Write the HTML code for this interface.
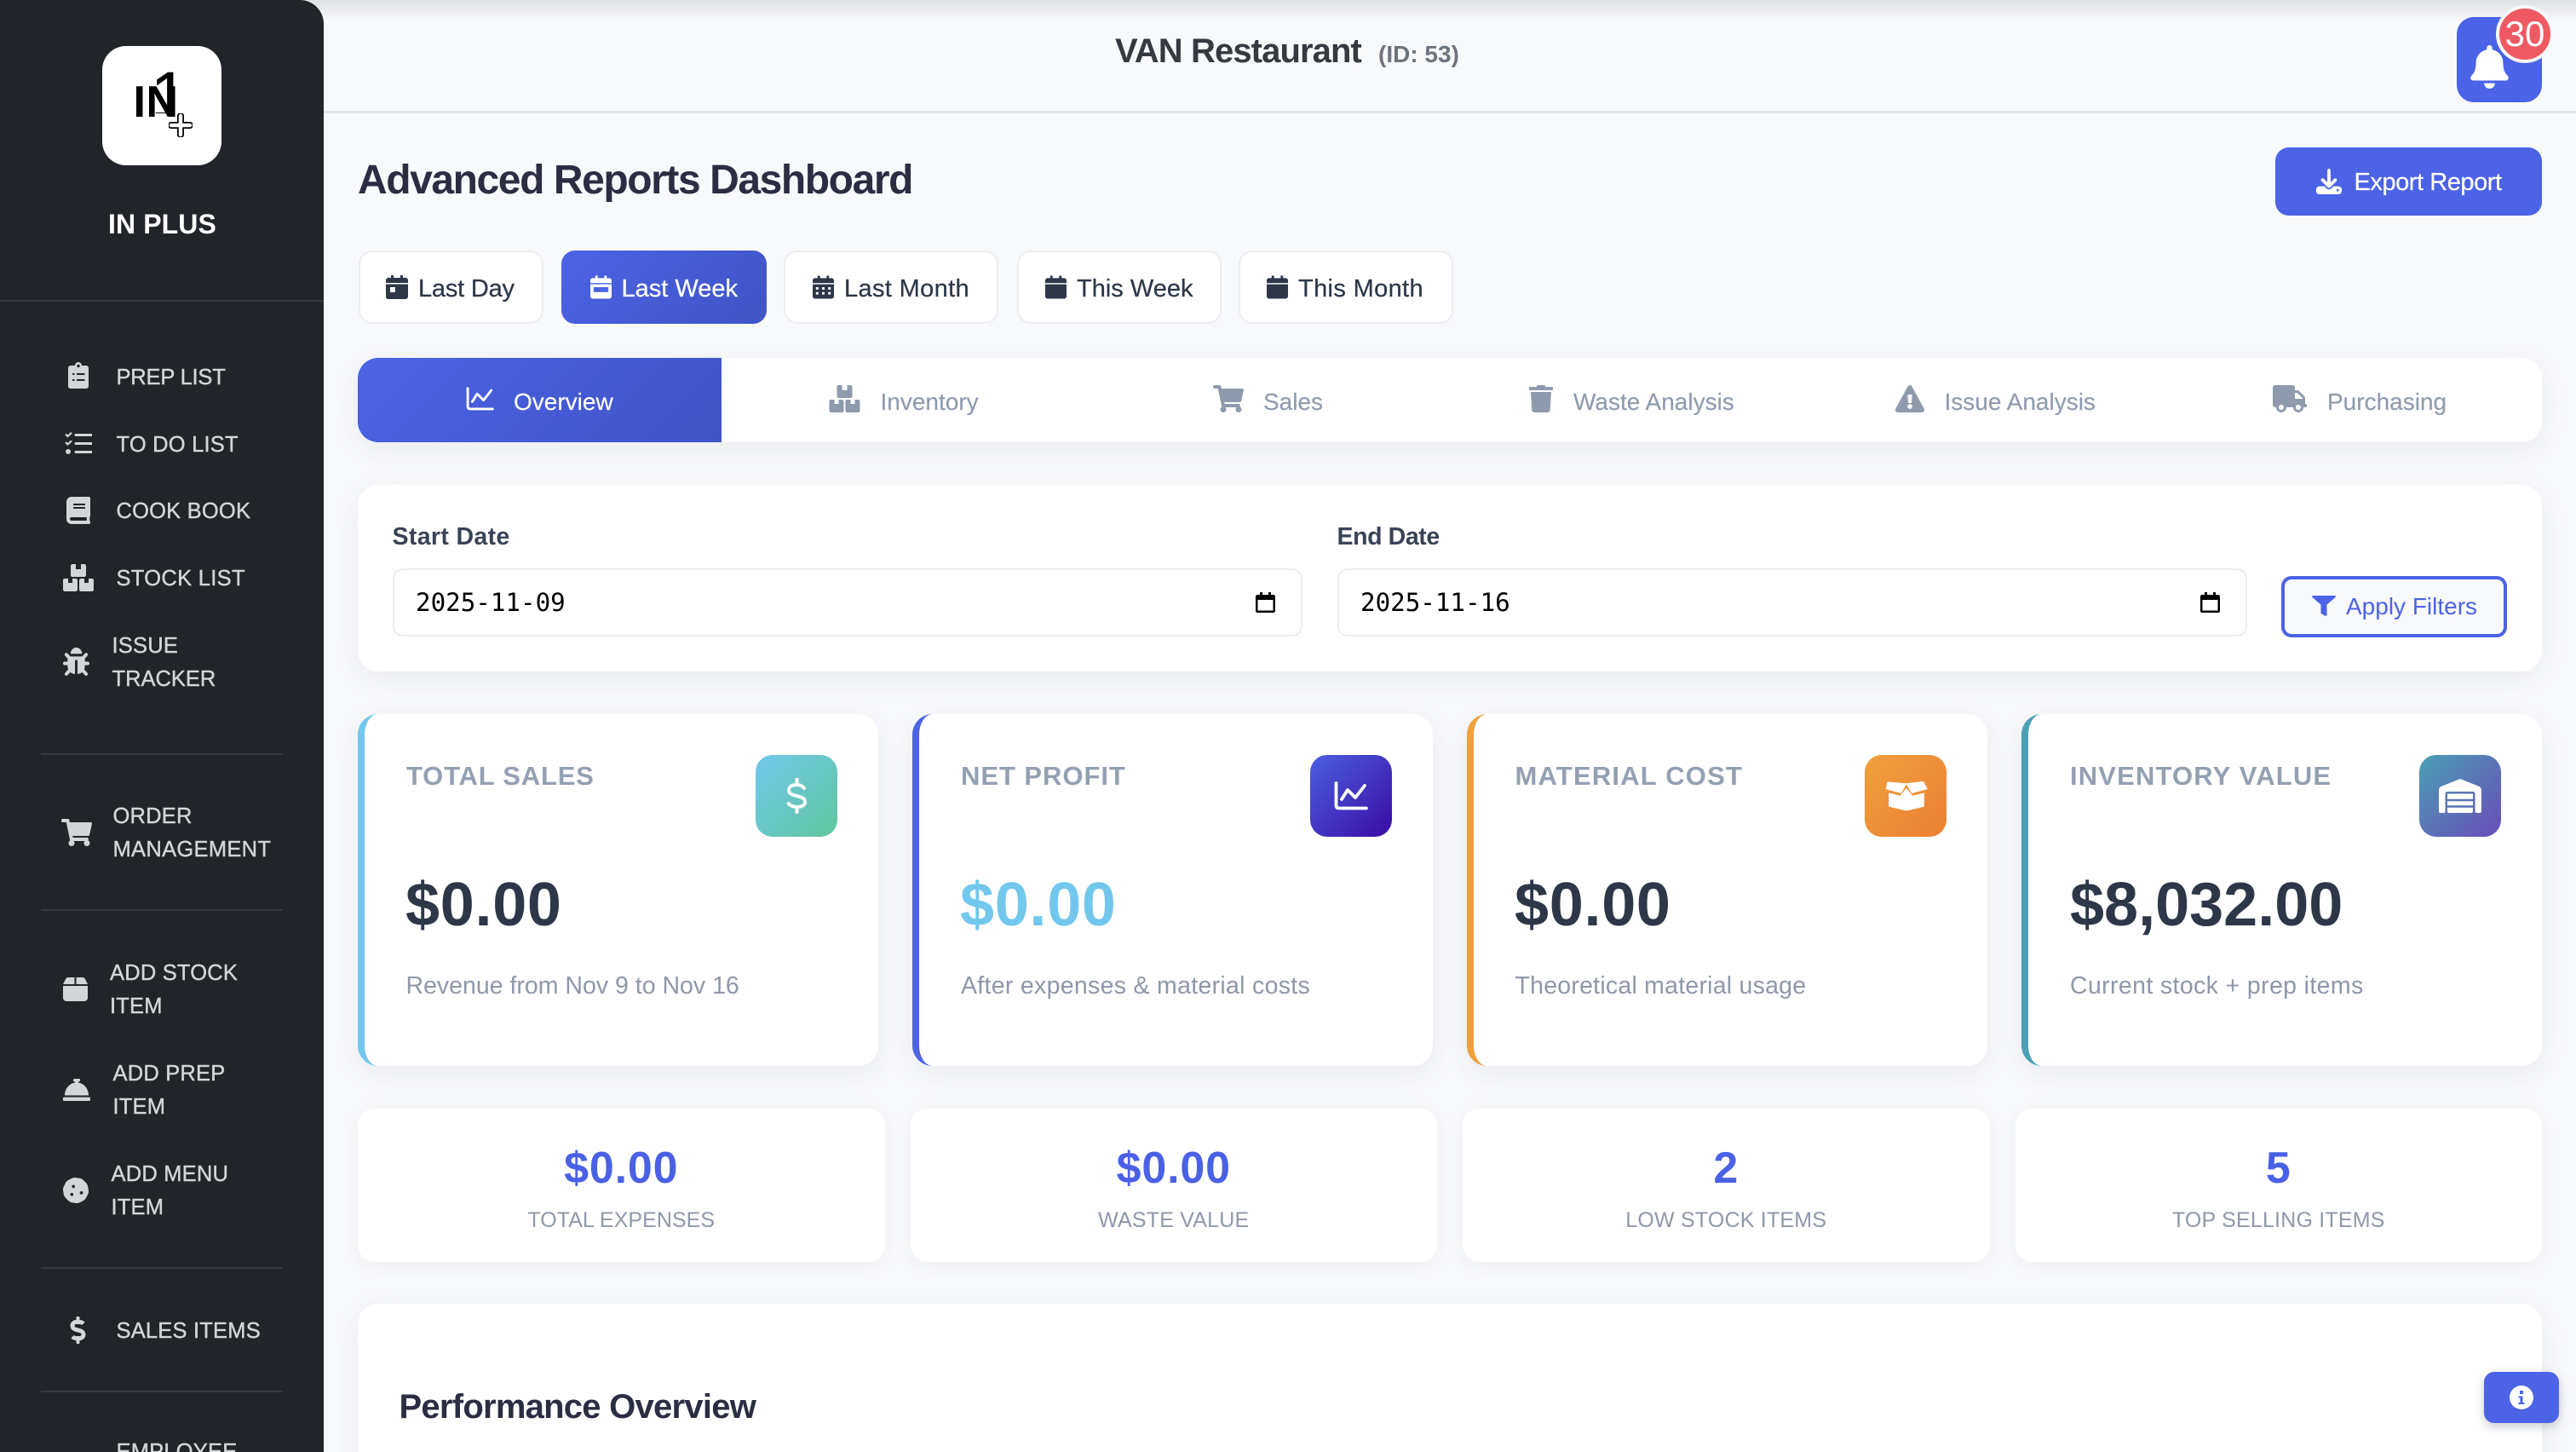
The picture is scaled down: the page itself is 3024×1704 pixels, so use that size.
<!DOCTYPE html>
<html lang="en"><head><meta charset="utf-8"><title>Advanced Reports Dashboard</title>
<style>
html,body{margin:0;padding:0;width:3024px;height:1704px;overflow:hidden;background:#f8f9fb;font-family:"Liberation Sans",sans-serif}
#p{position:relative;width:3024px;height:1704px;overflow:hidden;background:#f8f9fb}
#p div,#p svg,#p span.t{position:absolute;display:block}
.t{white-space:nowrap;line-height:40px;height:40px}
.s{font-size:25.5px;color:#d3d5d7;-webkit-text-stroke:.4px #d3d5d7;letter-spacing:.2px}
.d{background:#343a40;height:2px;left:48px;width:284px}
.b{background:#fff;border:2px solid #ebedf1;border-radius:16px;box-sizing:border-box;top:294px;height:86px}
.bt{font-size:29px;color:#2d3748;top:318.500px;-webkit-text-stroke:.25px #2d3748}
.tt{font-size:28px;color:#8f9aad;top:451.500px;-webkit-text-stroke:.15px #8f9aad}
.card{background:#fff;border-radius:24px;box-shadow:0 8px 30px rgba(40,50,80,.07)}
.k{top:838px;width:611px;height:413px;box-sizing:border-box;border-left:8px solid;background:#fff;border-radius:24px;box-shadow:0 8px 30px rgba(40,50,80,.07)}
.kt{font-size:31px;font-weight:bold;color:#94a0b2;top:891px;letter-spacing:1px}
.kv{font-size:72px;font-weight:bold;color:#2d3748;top:1042px}
.kd{font-size:28.5px;color:#8f97a8;top:1137px}
.tile{top:886px;width:96px;height:96px;border-radius:20px}
.m{top:1301px;width:618.500px;height:180px;background:#fff;border-radius:20px;box-shadow:0 4px 20px rgba(40,50,80,.05)}
.mv{font-size:52px;font-weight:bold;color:#4a61e6;top:1351px;width:618.500px;text-align:center;letter-spacing:.8px}
.ml{font-size:25px;color:#8f97a8;top:1412px;width:618.500px;text-align:center;letter-spacing:.2px}
.l{font-size:28.5px;font-weight:bold;color:#3a4256;top:610px}
.i{top:667px;height:80px;width:1068px;box-sizing:border-box;background:#fff;border:2px solid #ebedf1;border-radius:12px}
.it{font-family:"DejaVu Sans Mono",monospace;font-size:29.200px;color:#000;top:687px}
</style></head><body><div id="p">

<!-- top bar -->
<div style="left:0;top:130px;width:3024px;height:3px;background:#e2e4ec"></div>
<div style="left:0;top:0;width:3024px;height:24px;background:linear-gradient(#dfe0e2,#f8f9fb)"></div>

<!-- sidebar -->
<div style="left:0;top:0;width:380px;height:1704px;background:#212529;border-top-right-radius:28px"></div>
<div style="left:120px;top:54px;width:140px;height:140px;background:#fff;border-radius:28px"></div>
<span class="t" style="left:156.500px;top:96px;font-size:52px;font-weight:bold;color:#000;line-height:48px;height:48px">I</span>
<span class="t" style="left:171.500px;top:96px;font-size:52px;font-weight:bold;color:#000;line-height:48px;height:48px">N</span>
<div style="left:180px;top:80px;width:25px;height:53px;overflow:hidden"><span class="t" style="left:-3px;top:-7.700px;font-size:77px;color:#000;line-height:80px;height:80px;-webkit-text-stroke:.4px #000">1</span></div>
<svg style="left:198px;top:133px" width="28" height="28" viewBox="0 0 28 28"><path d="M14 3V25M3 14H25" stroke="#000" stroke-width="8" stroke-linecap="round"/><path d="M14 3V25M3 14H25" stroke="#fff" stroke-width="4.500" stroke-linecap="round"/></svg>
<span class="t" style="left:127px;top:243px;font-size:32px;font-weight:bold;color:#fff;letter-spacing:.1px">IN PLUS</span>
<div style="left:0;top:352px;width:380px;height:2px;background:#343a40"></div>

<svg style="left:80px;top:425px" width="24" height="31" viewBox="0 0 24 31"><path fill="#d3d5d7" d="M3 4H8C8 1.500 10 0 12 0S16 1.500 16 4H21C22.700 4 24 5.300 24 7V28C24 29.700 22.700 31 21 31H3C1.300 31 0 29.700 0 28V7C0 5.300 1.300 4 3 4Z"/><circle cx="12" cy="4.500" r="1.700" fill="#212529"/><path d="M5 14H7.500M10 14H19.500M5 21H7.500M10 21H19.500" stroke="#212529" stroke-width="2"/></svg>
<span class="t s" style="left:136.500px;top:422.500px;letter-spacing:-.2px">PREP LIST</span>
<svg style="left:76px;top:507px" width="32" height="27" viewBox="0 0 32 27"><path d="M1 2.500L3.500 5L8 0.800M1 12L3.500 14.500L8 10.300" fill="none" stroke="#d3d5d7" stroke-width="2.200"/><circle cx="4" cy="23" r="3" fill="#d3d5d7"/><path d="M13 3.500H32M13 13.500H32M13 23.500H32" stroke="#d3d5d7" stroke-width="3" stroke-linecap="round"/></svg>
<span class="t s" style="left:136.500px;top:501.500px">TO DO LIST</span>
<svg style="left:78px;top:583px" width="28" height="32" viewBox="0 0 448 512" fill="#d3d5d7"><path d="M448 360V24c0-13.300-10.700-24-24-24H96C43 0 0 43 0 96v320c0 53 43 96 96 96h328c13.300 0 24-10.700 24-24v-16c0-7.500-3.500-14.300-8.900-18.700-4.200-15.400-4.200-59.300 0-74.700 5.400-4.300 8.900-11.100 8.900-18.600zM128 134c0-3.300 2.700-6 6-6h212c3.300 0 6 2.700 6 6v20c0 3.300-2.700 6-6 6H134c-3.300 0-6-2.700-6-6v-20zm0 64c0-3.300 2.700-6 6-6h212c3.300 0 6 2.700 6 6v20c0 3.300-2.700 6-6 6H134c-3.300 0-6-2.700-6-6v-20zm253.400 250H96c-17.700 0-32-14.300-32-32 0-17.600 14.400-32 32-32h285.400c-1.900 17.100-1.900 46.900 0 64z"/></svg>
<span class="t s" style="left:136.500px;top:580px">COOK BOOK</span>
<svg style="left:74px;top:662px" width="36" height="32" viewBox="0 0 36 32" fill="#d3d5d7"><path fill-rule="evenodd" d="M11 0H15V6H21V0H25C26.100 0 27 .900 27 2V13C27 14.100 26.100 15 25 15H11C9.900 15 9 14.100 9 13V2C9 .900 9.900 0 11 0ZM2 17H6V22H11V17H15C16.100 17 17 17.900 17 19V30C17 31.100 16.100 32 15 32H2C.900 32 0 31.100 0 30V19C0 17.900 .900 17 2 17ZM21 17H25V22H30V17H34C35.100 17 36 17.900 36 19V30C36 31.100 35.100 32 34 32H21C19.900 32 19 31.100 19 30V19C19 17.900 19.900 17 21 17Z"/></svg>
<span class="t s" style="left:136.500px;top:659px;letter-spacing:.3px">STOCK LIST</span>
<svg style="left:74px;top:760px" width="31" height="33" viewBox="0 0 512 512" preserveAspectRatio="none" fill="#d3d5d7"><path d="M511.988 288.900c-.478 17.430-15.217 31.100-32.653 31.100H424v16c0 21.864-4.882 42.584-13.600 61.145l60.228 60.228c12.496 12.497 12.496 32.758 0 45.255-12.498 12.497-32.759 12.496-45.256 0l-54.736-54.736C345.886 467.965 314.351 480 280 480V236c0-6.627-5.373-12-12-12h-24c-6.627 0-12 5.373-12 12v244c-34.351 0-65.886-12.035-90.636-32.108l-54.736 54.736c-12.498 12.497-32.759 12.496-45.256 0-12.496-12.497-12.496-32.758 0-45.255l60.228-60.228C92.882 378.584 88 357.864 88 336v-16H32.666C15.230 320 .491 306.330.013 288.900-.484 270.816 14.028 256 32 256h56v-58.745l-46.628-46.628c-12.496-12.497-12.496-32.758 0-45.255 12.498-12.497 32.758-12.497 45.256 0L141.255 160h229.489l54.627-54.627c12.498-12.497 32.758-12.497 45.256 0 12.496 12.497 12.496 32.758 0 45.255L424 197.255V256h56c17.972 0 32.484 14.816 31.988 32.900zM257 0c-61.856 0-112 50.144-112 112h224C369 50.144 318.856 0 257 0z"/></svg>
<span class="t s" style="left:131.500px;top:738px">ISSUE</span>
<span class="t s" style="left:131.500px;top:777px;letter-spacing:0">TRACKER</span>
<div class="d" style="top:884px"></div>

<svg style="left:72px;top:961px" width="36" height="32" viewBox="0 0 576 512" fill="#d3d5d7"><path d="M528.120 301.319l47.273-208C578.806 78.301 567.391 64 551.990 64H159.208l-9.166-44.810C147.758 8.021 137.930 0 126.529 0H24C10.745 0 0 10.745 0 24v16c0 13.255 10.745 24 24 24h69.883l70.248 343.435C147.325 417.100 136 435.222 136 456c0 30.928 25.072 56 56 56s56-25.072 56-56c0-15.674-6.447-29.835-16.824-40h209.647C430.447 426.165 424 440.326 424 456c0 30.928 25.072 56 56 56s56-25.072 56-56c0-22.172-12.888-41.332-31.579-50.405l5.517-24.276c3.413-15.018-8.002-29.319-23.403-29.319H218.117l-6.545-32h293.145c11.206 0 20.920-7.754 23.403-18.681z"/></svg>
<span class="t s" style="left:132.500px;top:938px">ORDER</span>
<span class="t s" style="left:132.500px;top:977px;letter-spacing:.3px">MANAGEMENT</span>
<div class="d" style="top:1067px"></div>

<svg style="left:74px;top:1147px" width="29" height="28" viewBox="0 32 448 448" preserveAspectRatio="none" fill="#d3d5d7"><path d="M50.700 58.500L0 160H208V32H93.700C75.500 32 58.900 42.300 50.700 58.500zM240 160H448L397.300 58.500C389.100 42.300 372.500 32 354.300 32H240V160zm208 32H0V416c0 35.300 28.700 64 64 64H384c35.300 0 64-28.700 64-64V192z"/></svg>
<span class="t s" style="left:129px;top:1122px">ADD STOCK</span>
<span class="t s" style="left:129px;top:1161px">ITEM</span>
<svg style="left:74px;top:1266px" width="32" height="26" viewBox="0 64 512 384" preserveAspectRatio="none" fill="#d3d5d7"><path d="M288 130.540V112h16c8.840 0 16-7.160 16-16V80c0-8.840-7.160-16-16-16h-96c-8.840 0-16 7.160-16 16v16c0 8.840 7.160 16 16 16h16v18.540C115.490 146.110 32 239.180 32 352h448c0-112.820-83.490-205.890-192-221.460zM496 384H16c-8.840 0-16 7.160-16 16v32c0 8.840 7.160 16 16 16h480c8.840 0 16-7.160 16-16v-32c0-8.840-7.160-16-16-16z"/></svg>
<span class="t s" style="left:132.500px;top:1240px">ADD PREP</span>
<span class="t s" style="left:132.500px;top:1279px">ITEM</span>
<svg style="left:74px;top:1382px" width="30" height="30" viewBox="0 0 512 512" fill="#d3d5d7"><path d="M510.370 254.790l-12.080-76.260a132.493 132.493 0 0 0-37.160-72.950l-54.760-54.750c-19.730-19.720-45.180-32.700-72.710-37.050l-76.700-12.150c-27.510-4.360-55.690.110-80.520 12.760L107.320 49.600a132.250 132.250 0 0 0-57.790 57.800l-35.100 68.880a132.602 132.602 0 0 0-12.820 80.940l12.080 76.270a132.493 132.493 0 0 0 37.160 72.950l54.760 54.750a132.087 132.087 0 0 0 72.710 37.050l76.700 12.140c27.510 4.360 55.690-.110 80.520-12.750l69.120-35.210a132.302 132.302 0 0 0 57.790-57.800l35.100-68.870c12.710-24.960 17.200-53.300 12.820-80.960zM176 368c-17.670 0-32-14.330-32-32s14.330-32 32-32 32 14.330 32 32-14.330 32-32 32zm32-160c-17.670 0-32-14.330-32-32s14.330-32 32-32 32 14.330 32 32-14.330 32-32 32zm160 128c-17.670 0-32-14.330-32-32s14.330-32 32-32 32 14.330 32 32-14.330 32-32 32z"/></svg>
<span class="t s" style="left:130.500px;top:1358px">ADD MENU</span>
<span class="t s" style="left:130.500px;top:1397px">ITEM</span>
<div class="d" style="top:1487px"></div>

<svg style="left:82px;top:1545px" width="19" height="32" viewBox="0 0 288 512" fill="#d3d5d7"><path d="M209.200 233.400l-108-31.600C88.700 198.200 80 186.500 80 173.500c0-16.300 13.200-29.500 29.500-29.500h66.300c12.200 0 24.200 3.700 34.200 10.500 6.100 4.100 14.300 3.100 19.500-2l34.800-34c7.100-6.900 6.100-18.400-1.800-24.500C238 74.800 207.400 64.100 176 64V16c0-8.800-7.200-16-16-16h-32c-8.800 0-16 7.200-16 16v48h-2.500C45.800 64-5.400 118.700.5 183.600c4.200 46.100 39.400 83.600 83.800 96.600l102.500 30c12.500 3.700 21.200 15.300 21.200 28.300 0 16.300-13.200 29.500-29.500 29.500h-66.300C100 368 88 364.300 78 357.500c-6.100-4.100-14.300-3.100-19.500 2l-34.800 34c-7.100 6.900-6.100 18.400 1.800 24.500 24.500 19.200 55.100 29.900 86.500 30v48c0 8.800 7.200 16 16 16h32c8.800 0 16-7.200 16-16v-48.200c46.600-.9 90.300-28.600 105.700-72.700 21.500-61.600-14.600-124.800-72.500-141.700z"/></svg>
<span class="t s" style="left:136.500px;top:1542px">SALES ITEMS</span>
<div class="d" style="top:1632px"></div>
<span class="t s" style="left:136.500px;top:1684px">EMPLOYEE</span>

<!-- header -->
<span class="t" style="left:1309px;top:40px;font-size:40px;font-weight:bold;color:#343a40;letter-spacing:-.9px">VAN Restaurant</span>
<span class="t" style="left:1618px;top:44px;font-size:28px;font-weight:bold;color:#6c757d">(ID: 53)</span>
<div style="left:2884px;top:20px;width:100px;height:100px;border-radius:20px;background:#4a63e7"></div>
<svg style="left:2900px;top:53px" width="45" height="51" viewBox="0 0 448 512" fill="#fff"><path d="M224 512c35.320 0 63.970-28.650 63.970-64H160.030c0 35.350 28.650 64 63.970 64zm215.390-149.710c-19.320-20.760-55.470-51.990-55.470-154.290 0-77.700-54.480-139.900-127.940-155.160V32c0-17.670-14.320-32-31.980-32s-31.980 14.330-31.980 32v20.840C118.560 68.100 64.080 130.300 64.080 208c0 102.300-36.150 133.530-55.470 154.290-6 6.450-8.660 14.160-8.610 21.710.11 16.400 12.980 32 32.100 32h383.800c19.120 0 32-15.600 32.100-32 .05-7.550-2.610-15.270-8.610-21.710z"/></svg>
<div style="left:2930px;top:6px;width:68px;height:68px;box-sizing:border-box;border:4px solid #f8f9fb;border-radius:50%;background:#ef5a62"></div>
<span class="t" style="left:2930px;top:20px;width:68px;text-align:center;font-size:42px;color:#fff">30</span>

<!-- heading -->
<span class="t" style="left:420px;top:191.500px;font-size:48px;font-weight:bold;color:#2b2d42;letter-spacing:-1.430px">Advanced Reports Dashboard</span>
<div style="left:2671px;top:173px;width:313px;height:80px;border-radius:16px;background:#4c63e6"></div>
<svg style="left:2719px;top:198px" width="30" height="30" viewBox="0 0 512 512" fill="#fff"><path d="M288 32c0-17.700-14.300-32-32-32s-32 14.300-32 32V274.700l-73.400-73.400c-12.500-12.500-32.800-12.500-45.300 0s-12.500 32.800 0 45.300l128 128c12.500 12.500 32.800 12.500 45.300 0l128-128c12.500-12.500 12.500-32.800 0-45.300s-32.800-12.500-45.300 0L288 274.700V32zM64 352c-35.300 0-64 28.700-64 64v32c0 35.300 28.700 64 64 64H448c35.300 0 64-28.700 64-64V416c0-35.300-28.700-64-64-64H346.500l-45.300 45.300c-25 25-65.500 25-90.500 0L165.500 352H64zm368 56a24 24 0 1 1 0 48 24 24 0 1 1 0-48z"/></svg>
<span class="t" style="left:2763.500px;top:193.500px;font-size:29px;color:#fff;letter-spacing:-.45px;-webkit-text-stroke:.2px #fff">Export Report</span>

<!-- date buttons -->
<div class="b" style="left:421px;width:217px"></div>
<svg style="left:453px;top:323px" width="26" height="28" viewBox="0 0 26 28"><path fill="#2d3748" d="M6 0H9V3H17V0H20V3H23C24.700 3 26 4.300 26 6V25C26 26.700 24.700 28 23 28H3C1.300 28 0 26.700 0 25V6C0 4.300 1.300 3 3 3H6Z"/><rect y="9" width="26" height="1.500" fill="#fff"/><rect x="5" y="14" width="6" height="6" fill="#fff"/></svg>
<span class="t bt" style="left:491px;letter-spacing:-.2px">Last Day</span>
<div style="left:659px;top:294px;width:241px;height:86px;border-radius:16px;background:linear-gradient(135deg,#4c63e6,#3f54c4)"></div>
<svg style="left:693px;top:323px" width="25" height="28" viewBox="0 0 26 28"><path fill="#fff" d="M6 0H9V3H17V0H20V3H23C24.700 3 26 4.300 26 6V25C26 26.700 24.700 28 23 28H3C1.300 28 0 26.700 0 25V6C0 4.300 1.300 3 3 3H6Z"/><rect y="9" width="26" height="1.500" fill="#4c63e6"/><rect x="4" y="14" width="18" height="6" fill="#4c63e6"/></svg>
<span class="t bt" style="left:729.500px;color:#fff;-webkit-text-stroke:.25px #fff">Last Week</span>
<div class="b" style="left:920px;width:252px"></div>
<svg style="left:954px;top:323px" width="25" height="28" viewBox="0 0 26 28"><path fill="#2d3748" d="M6 0H9V3H17V0H20V3H23C24.700 3 26 4.300 26 6V25C26 26.700 24.700 28 23 28H3C1.300 28 0 26.700 0 25V6C0 4.300 1.300 3 3 3H6Z"/><rect y="9" width="26" height="1.500" fill="#fff"/><path d="M4 14h3v3h-3zM11.500 14h3v3h-3zM19 14h3v3h-3zM4 20h3v3h-3zM11.500 20h3v3h-3zM19 20h3v3h-3z" fill="#fff"/></svg>
<span class="t bt" style="left:991px;letter-spacing:.35px">Last Month</span>
<div class="b" style="left:1194px;width:240px"></div>
<svg style="left:1227px;top:323px" width="25" height="28" viewBox="0 0 26 28"><path fill="#2d3748" d="M6 0H9V3H17V0H20V3H23C24.700 3 26 4.300 26 6V25C26 26.700 24.700 28 23 28H3C1.300 28 0 26.700 0 25V6C0 4.300 1.300 3 3 3H6Z"/><rect y="9" width="26" height="1.500" fill="#fff"/></svg>
<span class="t bt" style="left:1264px">This Week</span>
<div class="b" style="left:1454px;width:252px"></div>
<svg style="left:1487px;top:323px" width="25" height="28" viewBox="0 0 26 28"><path fill="#2d3748" d="M6 0H9V3H17V0H20V3H23C24.700 3 26 4.300 26 6V25C26 26.700 24.700 28 23 28H3C1.300 28 0 26.700 0 25V6C0 4.300 1.300 3 3 3H6Z"/><rect y="9" width="26" height="1.500" fill="#fff"/></svg>
<span class="t bt" style="left:1524px;letter-spacing:.35px">This Month</span>

<!-- tabs -->
<div class="card" style="left:420px;top:420px;width:2564px;height:99px"></div>
<div style="left:420px;top:420px;width:427px;height:99px;border-radius:24px 0 0 24px;background:linear-gradient(135deg,#4c63e6,#3f54c4)"></div>
<svg style="left:547px;top:454px" width="33" height="28" viewBox="0 0 40 34" fill="none" stroke="#fff" stroke-width="3.500" stroke-linecap="round" stroke-linejoin="round"><path d="M2.500 2V28Q2.500 31.500 6 31.500H38M9 21L16 10L25 19L36 5"/></svg>
<span class="t tt" style="left:603px;color:#fff;-webkit-text-stroke:.15px #fff">Overview</span>
<svg style="left:973px;top:452px" width="37" height="32" viewBox="0 0 36 32" fill="#8f9aad"><path fill-rule="evenodd" d="M11 0H15V6H21V0H25C26.100 0 27 .900 27 2V13C27 14.100 26.100 15 25 15H11C9.900 15 9 14.100 9 13V2C9 .900 9.900 0 11 0ZM2 17H6V22H11V17H15C16.100 17 17 17.900 17 19V30C17 31.100 16.100 32 15 32H2C.900 32 0 31.100 0 30V19C0 17.900 .900 17 2 17ZM21 17H25V22H30V17H34C35.100 17 36 17.900 36 19V30C36 31.100 35.100 32 34 32H21C19.900 32 19 31.100 19 30V19C19 17.900 19.900 17 21 17Z"/></svg>
<span class="t tt" style="left:1033.500px">Inventory</span>
<svg style="left:1424px;top:452px" width="36" height="32" viewBox="0 0 576 512" fill="#8f9aad"><path d="M528.120 301.319l47.273-208C578.806 78.301 567.391 64 551.990 64H159.208l-9.166-44.810C147.758 8.021 137.930 0 126.529 0H24C10.745 0 0 10.745 0 24v16c0 13.255 10.745 24 24 24h69.883l70.248 343.435C147.325 417.100 136 435.222 136 456c0 30.928 25.072 56 56 56s56-25.072 56-56c0-15.674-6.447-29.835-16.824-40h209.647C430.447 426.165 424 440.326 424 456c0 30.928 25.072 56 56 56s56-25.072 56-56c0-22.172-12.888-41.332-31.579-50.405l5.517-24.276c3.413-15.018-8.002-29.319-23.403-29.319H218.117l-6.545-32h293.145c11.206 0 20.920-7.754 23.403-18.681z"/></svg>
<span class="t tt" style="left:1483px">Sales</span>
<svg style="left:1795px;top:452px" width="28" height="32" viewBox="0 0 448 512" fill="#8f9aad"><path d="M432 32H312l-9.400-18.700A24 24 0 0 0 281.100 0H166.800a23.720 23.720 0 0 0-21.400 13.300L136 32H16A16 16 0 0 0 0 48v32a16 16 0 0 0 16 16h416a16 16 0 0 0 16-16V48a16 16 0 0 0-16-16zM53.200 467a48 48 0 0 0 47.900 45h245.800a48 48 0 0 0 47.900-45L416 128H32z"/></svg>
<span class="t tt" style="left:1847px">Waste Analysis</span>
<svg style="left:2225px;top:452px" width="34" height="32" viewBox="0 0 576 512" preserveAspectRatio="none" fill="#8f9aad"><path d="M569.517 440.013C587.975 472.007 564.806 512 527.940 512H48.054c-36.937 0-59.999-40.055-41.577-71.987L246.423 24.035c18.467-32.009 64.720-31.951 83.154 0l239.940 416.178zM288 354c-25.405 0-46 20.595-46 46s20.595 46 46 46 46-20.595 46-46-20.595-46-46-46zm-43.673-165.346l7.418 136c.347 6.364 5.609 11.346 11.982 11.346h48.546c6.373 0 11.635-4.982 11.982-11.346l7.418-136c.375-6.874-5.098-12.654-11.982-12.654h-63.383c-6.884 0-12.356 5.780-11.981 12.654z"/></svg>
<span class="t tt" style="left:2282.500px">Issue Analysis</span>
<svg style="left:2668px;top:452px" width="40" height="32" viewBox="0 0 640 512" fill="#8f9aad"><path d="M624 352h-16V243.900c0-12.700-5.100-24.900-14.100-33.900L494 110.100c-9-9-21.200-14.100-33.900-14.100H416V48c0-26.500-21.500-48-48-48H48C21.500 0 0 21.500 0 48v320c0 26.500 21.500 48 48 48h16c0 53 43 96 96 96s96-43 96-96h128c0 53 43 96 96 96s96-43 96-96h48c8.800 0 16-7.200 16-16v-32c0-8.800-7.200-16-16-16zM160 464c-26.500 0-48-21.500-48-48s21.500-48 48-48 48 21.500 48 48-21.500 48-48 48zm320 0c-26.500 0-48-21.500-48-48s21.500-48 48-48 48 21.500 48 48-21.500 48-48 48zm80-208H416V144h44.100l99.900 99.900V256z"/></svg>
<span class="t tt" style="left:2732px">Purchasing</span>

<!-- filter card -->
<div class="card" style="left:420px;top:569px;width:2564px;height:219px"></div>
<span class="t l" style="left:460.500px;letter-spacing:.35px">Start Date</span>
<div class="i" style="left:460.500px"></div>
<span class="t it" style="left:488px">2025-11-09</span>
<svg style="left:1474px;top:695px" width="23" height="24" viewBox="0 0 23 24"><path d="M5 0H8V3H15V0H18V3H21C22.100 3 23 3.900 23 5V22C23 23.100 22.100 24 21 24H2C.900 24 0 23.100 0 22V5C0 3.900 .900 3 2 3H5ZM2.500 9V21.500H20.500V9Z" fill="#000" fill-rule="evenodd"/></svg>
<span class="t l" style="left:1569.500px;letter-spacing:-.4px">End Date</span>
<div class="i" style="left:1569.500px"></div>
<span class="t it" style="left:1597px">2025-11-16</span>
<svg style="left:2583px;top:695px" width="23" height="24" viewBox="0 0 23 24"><path d="M5 0H8V3H15V0H18V3H21C22.100 3 23 3.900 23 5V22C23 23.100 22.100 24 21 24H2C.900 24 0 23.100 0 22V5C0 3.900 .900 3 2 3H5ZM2.500 9V21.500H20.500V9Z" fill="#000" fill-rule="evenodd"/></svg>
<div style="left:2678px;top:676px;width:265px;height:72px;box-sizing:border-box;border:4px solid #4c63e6;border-radius:12px;background:#f8f9fb"></div>
<svg style="left:2714px;top:699px" width="28" height="24" viewBox="0 0 512 512" preserveAspectRatio="none" fill="#4c63e6"><path d="M487.976 0H24.028C2.710 0-8.047 25.866 7.058 40.971L192 225.941V432c0 7.831 3.821 15.170 10.237 19.662l80 55.980C298.020 518.690 320 507.493 320 487.980V225.941l184.947-184.970C520.021 25.896 509.338 0 487.976 0z"/></svg>
<span class="t" style="left:2754px;top:692px;font-size:28px;color:#4c63e6">Apply Filters</span>

<!-- KPI -->
<div class="k" style="left:420px;border-left-color:#72c7ec"></div>
<span class="t kt" style="left:477px;letter-spacing:.8px">TOTAL SALES</span>
<div class="tile" style="left:887px;background:linear-gradient(135deg,#72c7ec,#5fc79c)"></div>
<svg style="left:922px;top:913px" width="26" height="42" viewBox="0 0 26 42" fill="none" stroke="#fff" stroke-width="4" stroke-linecap="round"><path d="M22 12C20 9.500 17 8 13.500 8C8 8 4 10 4 14.500C4 23 23 19 23 28C23 32 19 34 13.500 34C9.500 34 6 32.500 3.500 30M13.500 2V8M13.500 34V40"/></svg>
<span class="t kv" style="left:476px;letter-spacing:.7px">$0.00</span>
<span class="t kd" style="left:476.500px">Revenue from Nov 9 to Nov 16</span>

<div class="k" style="left:1071px;border-left-color:#4c63e6"></div>
<span class="t kt" style="left:1128px;letter-spacing:.95px">NET PROFIT</span>
<div class="tile" style="left:1538px;background:linear-gradient(135deg,#4c5fe0,#3a0ca3)"></div>
<svg style="left:1566px;top:917px" width="40" height="34" viewBox="0 0 40 34" fill="none" stroke="#fff" stroke-width="3.800" stroke-linecap="round" stroke-linejoin="round"><path d="M2.500 2V28Q2.500 31.500 6 31.500H38M9 21L16 10L25 19L36 5"/></svg>
<span class="t kv" style="left:1127px;color:#72c7ec;letter-spacing:.7px">$0.00</span>
<span class="t kd" style="left:1128px;letter-spacing:.3px">After expenses &amp; material costs</span>

<div class="k" style="left:1722px;border-left-color:#f0a03e"></div>
<span class="t kt" style="left:1778.500px;letter-spacing:1.2px">MATERIAL COST</span>
<div class="tile" style="left:2189px;background:linear-gradient(135deg,#f0a03e,#ec7f32)"></div>
<svg style="left:2212.500px;top:916px" width="50" height="36" viewBox="205 168 90 107" preserveAspectRatio="none" fill="#fff" stroke="#fff" stroke-width="3" stroke-linejoin="round"><path d="M211 174L249 179L238 211L208 197ZM251 179L285 172L293 197L262 211ZM214 213L238 223L250 197L262 223L286 213V258L250 272L214 258Z"/></svg>
<span class="t kv" style="left:1778px;letter-spacing:.7px">$0.00</span>
<span class="t kd" style="left:1778.500px;letter-spacing:.23px">Theoretical material usage</span>

<div class="k" style="left:2373px;border-left-color:#4aa0b5;width:611px"></div>
<span class="t kt" style="left:2430px;letter-spacing:1.15px">INVENTORY VALUE</span>
<div class="tile" style="left:2840px;background:linear-gradient(135deg,#4aa0b5,#6a4bb8)"></div>
<svg style="left:2862.500px;top:914px" width="50" height="40" viewBox="0 0 640 512" fill="#fff"><path d="M0 488V171.300c0-26.200 15.900-49.700 40.200-59.400L308.100 4.800c7.600-3.100 16.100-3.100 23.800 0L599.800 111.900c24.300 9.700 40.200 33.300 40.200 59.400V488c0 13.300-10.700 24-24 24H568c-13.300 0-24-10.700-24-24V224c0-17.700-14.300-32-32-32H128c-17.700 0-32 14.300-32 32V488c0 13.300-10.700 24-24 24H24c-13.300 0-24-10.700-24-24zm488 24H152c-13.300 0-24-10.700-24-24V432H512v56c0 13.300-10.700 24-24 24zM128 400V336H512v64H128zm0-96V224H512v80H128z"/></svg>
<span class="t kv" style="left:2430px">$8,032.00</span>
<span class="t kd" style="left:2430px;letter-spacing:.37px">Current stock + prep items</span>

<!-- mini stats -->
<div class="m" style="left:420px"></div>
<span class="t mv" style="left:420px">$0.00</span>
<span class="t ml" style="left:420px;letter-spacing:.05px">TOTAL EXPENSES</span>
<div class="m" style="left:1068.500px"></div>
<span class="t mv" style="left:1068.500px">$0.00</span>
<span class="t ml" style="left:1068.500px">WASTE VALUE</span>
<div class="m" style="left:1717px"></div>
<span class="t mv" style="left:1717px">2</span>
<span class="t ml" style="left:1717px">LOW STOCK ITEMS</span>
<div class="m" style="left:2365.500px"></div>
<span class="t mv" style="left:2365.500px">5</span>
<span class="t ml" style="left:2365.500px">TOP SELLING ITEMS</span>

<!-- performance -->
<div class="card" style="left:420px;top:1530px;width:2564px;height:220px"></div>
<span class="t" style="left:468.500px;top:1631px;font-size:40px;font-weight:bold;color:#2b2d42;letter-spacing:-.75px">Performance Overview</span>

<!-- floating info -->
<div style="left:2916px;top:1610px;width:88px;height:60px;border-radius:12px;background:#4c63e6;box-shadow:0 4px 12px rgba(40,50,80,.25)"></div>
<svg style="left:2946px;top:1626px" width="28" height="28" viewBox="0 0 28 28"><circle cx="14" cy="14" r="14" fill="#fff"/><rect x="12" y="6" width="4" height="4" fill="#4c63e6"/><path d="M10.500 12.500H15.500V20H17.500V22H10.500V20H12.500V14.500H10.500Z" fill="#4c63e6"/></svg>

</div></body></html>
